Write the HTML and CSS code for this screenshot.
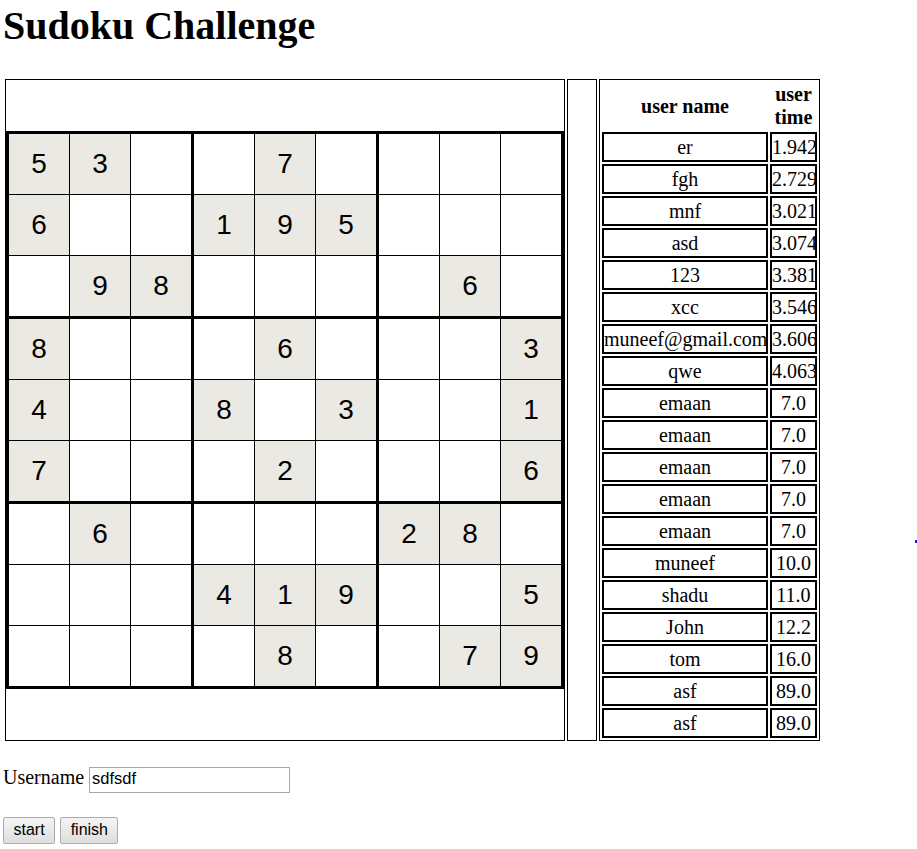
FILE: index.html
```html
<!DOCTYPE html>
<html>
<head>
<meta charset="utf-8">
<title>Sudoku Challenge</title>
<link rel="stylesheet" href="styles.css">
</head>
<body>
<h1 class="title">Sudoku Challenge</h1>
<table class="layout">
  <tr>
    <td class="board-cell">
      <div class="board">
        <div class="box">
          <div class="c g">5</div><div class="c g">3</div><div class="c"></div>
          <div class="c g">6</div><div class="c"></div><div class="c"></div>
          <div class="c"></div><div class="c g">9</div><div class="c g">8</div>
        </div>
        <div class="box">
          <div class="c"></div><div class="c g">7</div><div class="c"></div>
          <div class="c g">1</div><div class="c g">9</div><div class="c g">5</div>
          <div class="c"></div><div class="c"></div><div class="c"></div>
        </div>
        <div class="box">
          <div class="c"></div><div class="c"></div><div class="c"></div>
          <div class="c"></div><div class="c"></div><div class="c"></div>
          <div class="c"></div><div class="c g">6</div><div class="c"></div>
        </div>
        <div class="box">
          <div class="c g">8</div><div class="c"></div><div class="c"></div>
          <div class="c g">4</div><div class="c"></div><div class="c"></div>
          <div class="c g">7</div><div class="c"></div><div class="c"></div>
        </div>
        <div class="box">
          <div class="c"></div><div class="c g">6</div><div class="c"></div>
          <div class="c g">8</div><div class="c"></div><div class="c g">3</div>
          <div class="c"></div><div class="c g">2</div><div class="c"></div>
        </div>
        <div class="box">
          <div class="c"></div><div class="c"></div><div class="c g">3</div>
          <div class="c"></div><div class="c"></div><div class="c g">1</div>
          <div class="c"></div><div class="c"></div><div class="c g">6</div>
        </div>
        <div class="box">
          <div class="c"></div><div class="c g">6</div><div class="c"></div>
          <div class="c"></div><div class="c"></div><div class="c"></div>
          <div class="c"></div><div class="c"></div><div class="c"></div>
        </div>
        <div class="box">
          <div class="c"></div><div class="c"></div><div class="c"></div>
          <div class="c g">4</div><div class="c g">1</div><div class="c g">9</div>
          <div class="c"></div><div class="c g">8</div><div class="c"></div>
        </div>
        <div class="box">
          <div class="c g">2</div><div class="c g">8</div><div class="c"></div>
          <div class="c"></div><div class="c"></div><div class="c g">5</div>
          <div class="c"></div><div class="c g">7</div><div class="c g">9</div>
        </div>
      </div>
    </td>
    <td class="spacer-cell"></td>
    <td class="score-cell">
      <table class="scores">
        <colgroup><col class="col-name"><col class="col-time"></colgroup>
        <tr><th>user name</th><th>user time</th></tr>
        <tr><td>er</td><td>1.942</td></tr>
        <tr><td>fgh</td><td>2.729</td></tr>
        <tr><td>mnf</td><td>3.021</td></tr>
        <tr><td>asd</td><td>3.074</td></tr>
        <tr><td>123</td><td>3.381</td></tr>
        <tr><td>xcc</td><td>3.546</td></tr>
        <tr><td>muneef@gmail.com</td><td>3.606</td></tr>
        <tr><td>qwe</td><td>4.063</td></tr>
        <tr><td>emaan</td><td>7.0</td></tr>
        <tr><td>emaan</td><td>7.0</td></tr>
        <tr><td>emaan</td><td>7.0</td></tr>
        <tr><td>emaan</td><td>7.0</td></tr>
        <tr><td>emaan</td><td>7.0</td></tr>
        <tr><td>muneef</td><td>10.0</td></tr>
        <tr><td>shadu</td><td>11.0</td></tr>
        <tr><td>John</td><td>12.2</td></tr>
        <tr><td>tom</td><td>16.0</td></tr>
        <tr><td>asf</td><td>89.0</td></tr>
        <tr><td>asf</td><td>89.0</td></tr>
      </table>
    </td>
  </tr>
</table>
<div class="user-row">
  <label class="user-label" for="username">Username</label>
  <input class="user-input" id="username" type="text" value="sdfsdf">
</div>
<div class="button-row">
  <button class="btn">start</button>
  <button class="btn">finish</button>
</div>
<span class="dot"></span>
</body>
</html>
```
FILE: styles.css
```css
html, body {
  background: #fff;
}
body {
  margin: 0;
  padding: 3px;
  font-family: "Liberation Serif", "Times New Roman", serif;
  font-size: 20px;
  color: #000;
}
.title {
  margin: 0 0 28px 0;
  font-size: 40px;
  font-weight: bold;
  line-height: 46px;
}
.layout {
  border-spacing: 2px;
  border-collapse: separate;
  margin: 0;
}
.layout > tbody > tr > td {
  border: 1px solid #000;
  padding: 0;
}
.board-cell {
  vertical-align: middle;
}
.spacer-cell {
  width: 28px;
}
.score-cell {
  vertical-align: top;
}
.board {
  display: grid;
  grid-template-columns: repeat(3, 182px);
  grid-template-rows: repeat(3, 182px);
  gap: 3px;
  padding: 3px;
  background: #000;
  width: 552px;
}
.box {
  display: grid;
  grid-template-columns: repeat(3, 60px);
  grid-template-rows: repeat(3, 60px);
  gap: 1px;
  background: #000;
}
.c {
  background: #fff;
  display: flex;
  align-items: center;
  justify-content: center;
  font-family: "Liberation Sans", Arial, sans-serif;
  font-size: 28px;
}
.c.g {
  background: #eae9e3;
}
.scores {
  table-layout: fixed;
  width: 219px;
  border-spacing: 2px;
  border-collapse: separate;
}
.col-name {
  width: 166px;
}
.col-time {
  width: 47px;
}
.scores th {
  padding: 1px;
  font-weight: bold;
  line-height: 23px;
  text-align: center;
}
.scores td {
  border: 2px solid #000;
  padding: 0;
  line-height: 26px;
  text-align: center;
  white-space: nowrap;
}
.user-row {
  display: flex;
  align-items: baseline;
  gap: 5px;
  margin-top: 23px;
}
.user-input {
  box-sizing: border-box;
  width: 201px;
  height: 26px;
  border: 1px solid #a9a9a9;
  padding: 0 2px 2px;
  font-family: "Liberation Sans", Arial, sans-serif;
  font-size: 16.5px;
  margin: 0;
}
.button-row {
  display: flex;
  gap: 5px;
  margin-top: 24px;
}
.btn {
  box-sizing: border-box;
  height: 27px;
  padding: 0 9.5px;
  border: 1px solid #acacac;
  border-radius: 2px;
  background: linear-gradient(#f4f4f4, #dedede);
  font-family: "Liberation Sans", Arial, sans-serif;
  font-size: 16px;
  color: #000;
  margin: 0;
}
.dot {
  position: absolute;
  left: 915px;
  top: 540px;
  width: 2px;
  height: 3px;
  background: #1a1aff;
}
```
